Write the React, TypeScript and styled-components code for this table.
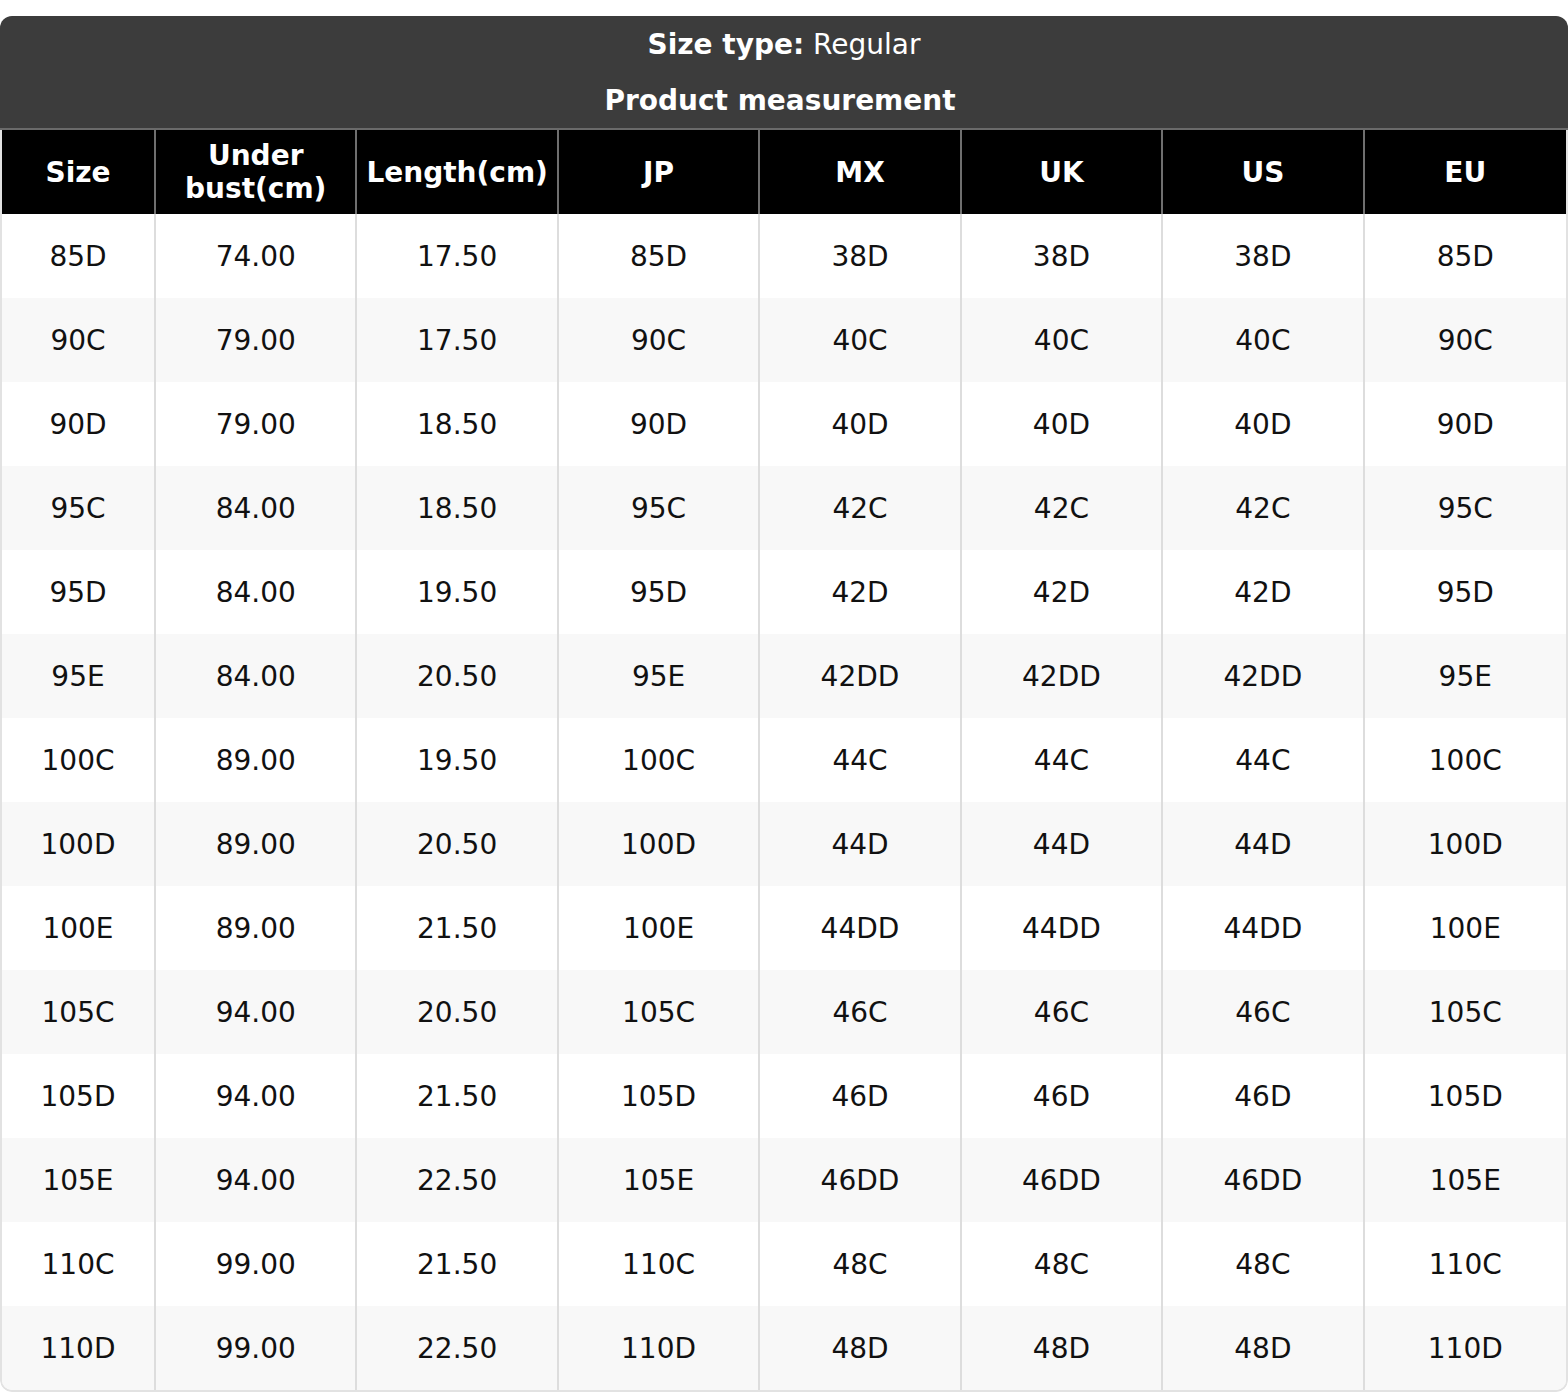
import React from 'react';
import styled, { createGlobalStyle } from 'styled-components';

const GlobalStyle = createGlobalStyle`
  body {
    margin: 0;
    background: #ffffff;
    font-family: "DejaVu Sans", "Liberation Sans", sans-serif;
  }
`;

const Page = styled.div`
  padding-top: 16px;
  width: 1568px;
`;

const Card = styled.div`
  width: 1568px;
  border-radius: 12px;
  overflow: hidden;
  background: #ffffff;
`;

const TitleBar = styled.div`
  background: #3c3c3c;
  color: #ffffff;
  border-bottom: 2px solid #6a6a6a;
`;

const TitleLine = styled.div<{ $bold?: boolean; $shift?: number }>`
  height: 56px;
  display: flex;
  align-items: center;
  justify-content: center;
  font-size: 28px;
  font-weight: ${({ $bold }) => ($bold ? 700 : 400)};
  padding-right: ${({ $shift }) => $shift ?? 0}px;
  b {
    font-weight: 700;
  }
`;

const Grid = styled.div`
  display: grid;
  grid-template-columns: 154px repeat(7, 1fr);
  border: 2px solid #e2e2e2;
  border-top: none;
  border-radius: 0 0 12px 12px;
  overflow: hidden;
`;

const HeadCell = styled.div`
  height: 84px;
  background: #000000;
  color: #ffffff;
  font-size: 28px;
  font-weight: 700;
  line-height: 33px;
  display: flex;
  align-items: center;
  justify-content: center;
  text-align: center;
  border-right: 2px solid #6f6f6f;
  &:nth-child(8) {
    border-right: none;
  }
`;

const Cell = styled.div<{ $striped: boolean; $last: boolean }>`
  height: 84px;
  background: ${({ $striped }) => ($striped ? '#f8f8f8' : '#ffffff')};
  color: #111111;
  font-size: 28px;
  display: flex;
  align-items: center;
  justify-content: center;
  border-right: ${({ $last }) => ($last ? 'none' : '2px solid #dddddd')};
`;

const headers = ['Size', 'Under bust(cm)', 'Length(cm)', 'JP', 'MX', 'UK', 'US', 'EU'];

const rows: string[][] = [
  ['85D', '74.00', '17.50', '85D', '38D', '38D', '38D', '85D'],
  ['90C', '79.00', '17.50', '90C', '40C', '40C', '40C', '90C'],
  ['90D', '79.00', '18.50', '90D', '40D', '40D', '40D', '90D'],
  ['95C', '84.00', '18.50', '95C', '42C', '42C', '42C', '95C'],
  ['95D', '84.00', '19.50', '95D', '42D', '42D', '42D', '95D'],
  ['95E', '84.00', '20.50', '95E', '42DD', '42DD', '42DD', '95E'],
  ['100C', '89.00', '19.50', '100C', '44C', '44C', '44C', '100C'],
  ['100D', '89.00', '20.50', '100D', '44D', '44D', '44D', '100D'],
  ['100E', '89.00', '21.50', '100E', '44DD', '44DD', '44DD', '100E'],
  ['105C', '94.00', '20.50', '105C', '46C', '46C', '46C', '105C'],
  ['105D', '94.00', '21.50', '105D', '46D', '46D', '46D', '105D'],
  ['105E', '94.00', '22.50', '105E', '46DD', '46DD', '46DD', '105E'],
  ['110C', '99.00', '21.50', '110C', '48C', '48C', '48C', '110C'],
  ['110D', '99.00', '22.50', '110D', '48D', '48D', '48D', '110D'],
];

export default function App() {
  return (
    <Page>
      <GlobalStyle />
      <Card>
        <TitleBar>
          <TitleLine>
            <span>
              <b>Size type:</b> Regular
            </span>
          </TitleLine>
          <TitleLine $bold $shift={8}>Product measurement</TitleLine>
        </TitleBar>
        <Grid>
          {headers.map((h) => (
            <HeadCell key={h}>
              {h === 'Under bust(cm)' ? (
                <span>
                  Under
                  <br />
                  bust(cm)
                </span>
              ) : (
                h
              )}
            </HeadCell>
          ))}
          {rows.map((row, i) =>
            row.map((v, j) => (
              <Cell key={`${i}-${j}`} $striped={i % 2 === 1} $last={j === row.length - 1}>
                {v}
              </Cell>
            ))
          )}
        </Grid>
      </Card>
    </Page>
  );
}
